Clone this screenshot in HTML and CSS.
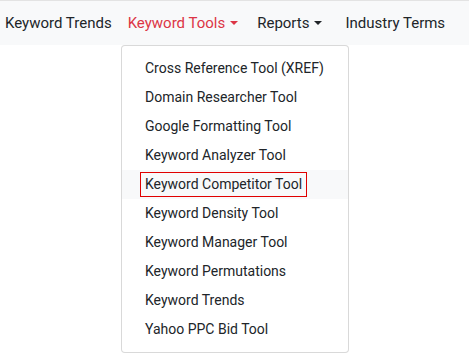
FILE: index.html
```html
<!DOCTYPE html>
<html lang="en">
<head>
    <meta charset="UTF-8">
    <meta name="viewport" content="width=device-width, initial-scale=1.0">
    <title>Keyword Tools</title>
    <link rel="stylesheet" href="styles.css">
</head>
<body>
    <nav class="topbar">
        <ul class="top-links">
            <li class="top-item"><a class="top-link" href="#">Keyword Trends</a></li>
            <li class="top-item"><a class="top-link current caret" href="#">Keyword Tools</a></li>
            <li class="top-item reports"><a class="top-link caret" href="#">Reports</a></li>
            <li class="top-item terms"><a class="top-link" href="#">Industry Terms</a></li>
        </ul>
    </nav>
    <div class="menu-panel">
        <a class="menu-link" href="#">Cross Reference Tool (XREF)</a>
        <a class="menu-link" href="#">Domain Researcher Tool</a>
        <a class="menu-link" href="#">Google Formatting Tool</a>
        <a class="menu-link" href="#">Keyword Analyzer Tool</a>
        <a class="menu-link hovered" href="#"><span class="outlined">Keyword Competitor Tool</span></a>
        <a class="menu-link" href="#">Keyword Density Tool</a>
        <a class="menu-link" href="#">Keyword Manager Tool</a>
        <a class="menu-link" href="#">Keyword Permutations</a>
        <a class="menu-link" href="#">Keyword Trends</a>
        <a class="menu-link" href="#">Yahoo PPC Bid Tool</a>
    </div>
</body>
</html>
```

FILE: styles.css
```css
body{
    margin: 0;
    font-family: Roboto, "Liberation Sans", sans-serif;
    color: #212529;
    background: #fff;
}
.topbar{
    background-color: #f8f9fa;
    border-top: 1px solid #e3e3e3;
    height: 44px;
}
.top-links{
    list-style: none;
    margin: 0 0 0 -3px;
    padding: 0;
    display: flex;
    align-items: center;
}
.top-item.reports{
    margin-left: 3px;
}
.top-item.terms{
    margin-left: 7px;
}
.top-link{
    display: block;
    padding: 0 8px;
    font-size: 15px;
    line-height: 44px;
    color: #212529;
    text-decoration: none;
}
.top-link.current{
    color: #dc3545;
}
.caret::after{
    content: '';
    display: inline-block;
    margin-left: 5px;
    vertical-align: 3px;
    border-top: 4px solid;
    border-left: 4px solid transparent;
    border-right: 4px solid transparent;
}
.menu-panel{
    box-sizing: border-box;
    width: 228px;
    margin-left: 121px;
    padding: 8px 0;
    background: #fff;
    border: 1px solid rgba(0,0,0,.15);
    border-radius: 4px;
}
.menu-link{
    display: block;
    padding: 4px 23px;
    font-size: 14px;
    line-height: 21px;
    color: #212529;
    text-decoration: none;
    white-space: nowrap;
}
.menu-link.hovered{
    background-color: #f8f9fa;
}
.outlined{
    display: inline-block;
    margin: -1px -4px;
    padding: 1px 4px;
    outline: 1px solid #e00000;
}
```
